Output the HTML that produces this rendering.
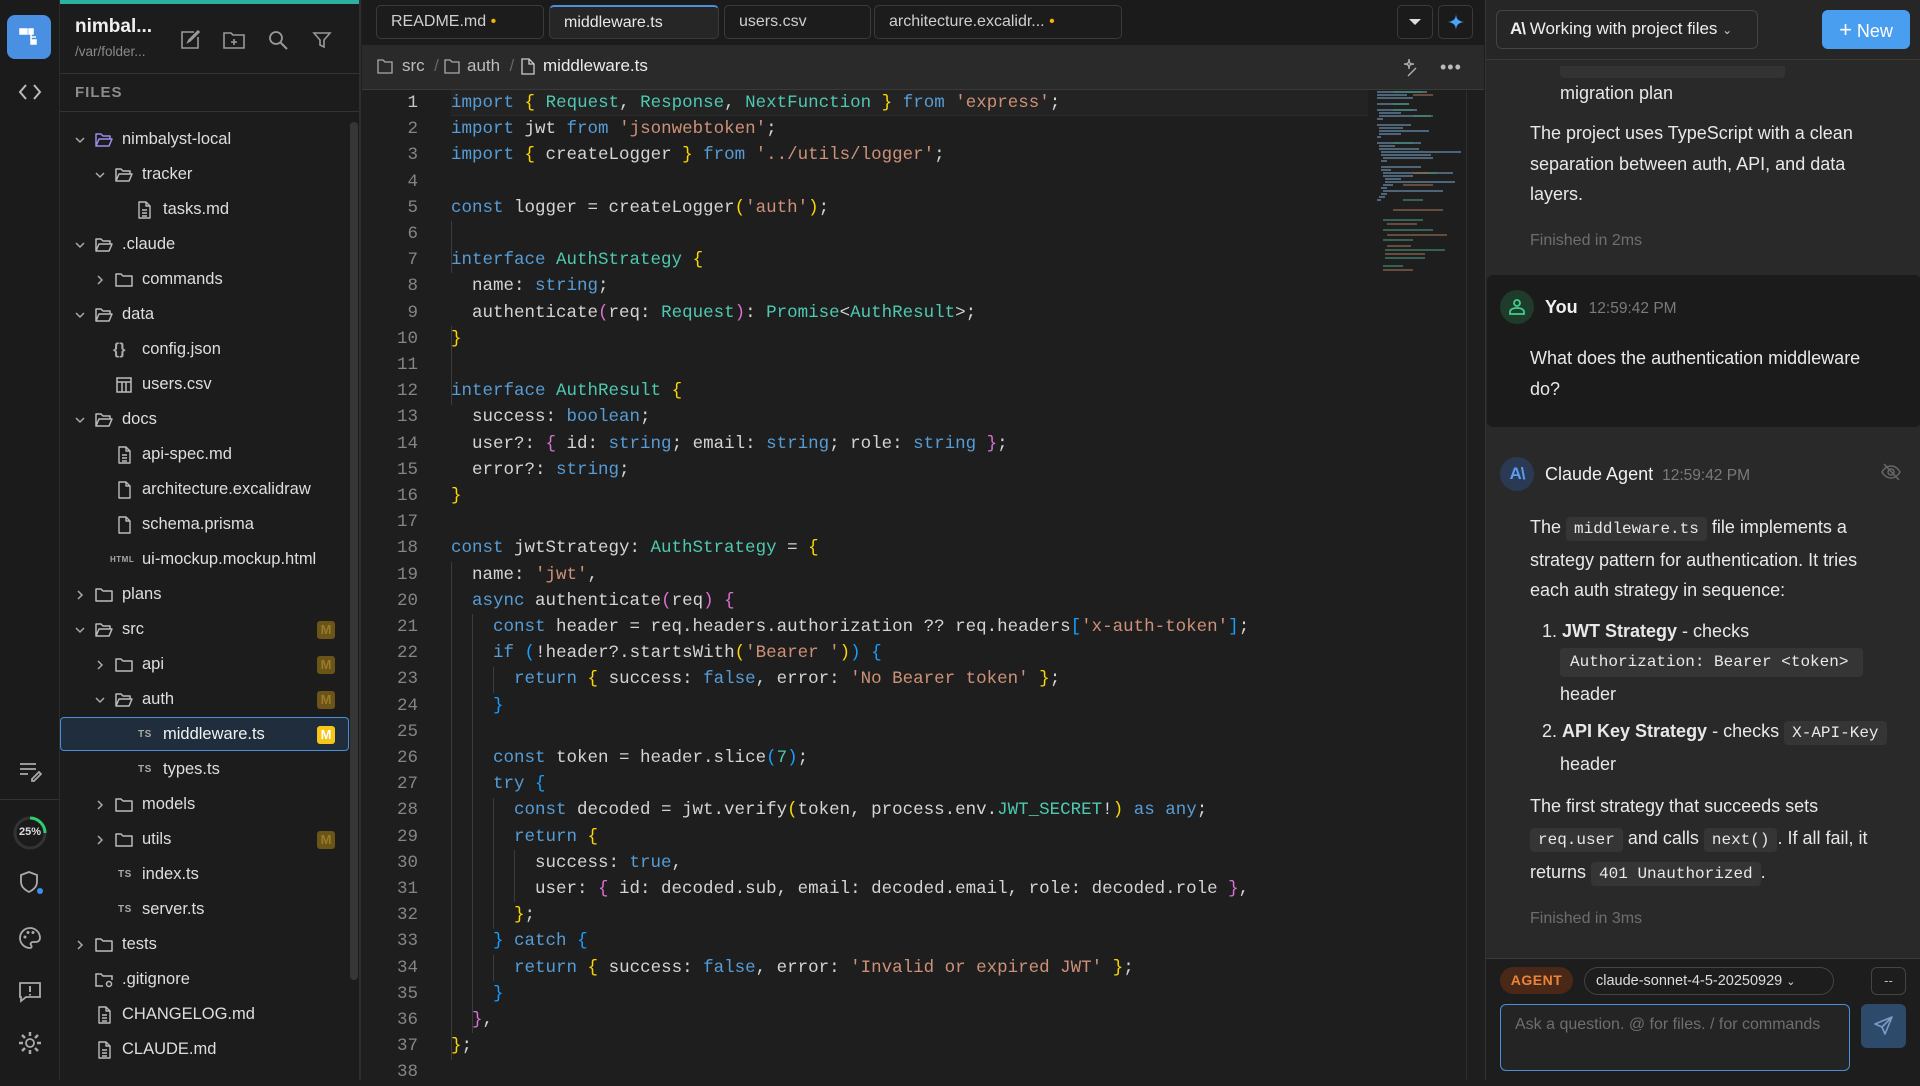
<!DOCTYPE html>
<html><head><meta charset="utf-8"><style>
*{box-sizing:border-box;margin:0;padding:0}
body{width:1920px;height:1080px;overflow:hidden;background:#1e1e1e;font-family:"Liberation Sans",sans-serif;color:#e2e2e2;position:relative}
.abs{position:absolute}
#act{left:0;top:0;width:60px;height:1080px;background:#1b1b1b;border-right:1px solid #2c2c2c}
#side{left:60px;top:0;width:301px;height:1080px;background:#1c1c1c;border-right:2px solid #2e2e2e}
.row{position:absolute;left:0;width:290px;height:35px;font-size:16.5px;line-height:35px;color:#dedede;white-space:nowrap}
.row svg{position:absolute;top:9px}
.badge{position:absolute;left:257px;top:9px;width:18px;height:18px;border-radius:3px;background:#6b5418;color:#9a7a26;font-size:13px;line-height:18px;text-align:center;font-weight:bold}
.ts{position:absolute;top:0;font-size:10px;font-weight:bold;color:#aaa;letter-spacing:.5px}
#ed{left:362px;top:0;width:1122px;height:1080px;background:#1e1e1e}
.tab{position:absolute;top:5px;height:34px;border:1px solid #3a3a3a;border-radius:5px;background:#1c1c1c;font-size:16px;line-height:32px;padding-left:14px;color:#cfcfcf}
.code{position:absolute;left:451px;font-family:"Liberation Mono",monospace;font-size:17.5px;height:26.2px;line-height:26.2px;white-space:pre;color:#d4d4d4}
.ln{position:absolute;left:362px;width:56px;text-align:right;font-family:"Liberation Mono",monospace;font-size:17.5px;height:26.2px;line-height:26.2px;color:#858585}
.k{color:#569cd6}.t{color:#4ec9b0}.s{color:#ce9178}.y{color:#ffd700}.p{color:#da70d6}.b{color:#179fff}
.g{position:absolute;width:1px;background:#3c3c3c}
#chat{left:1485px;top:0;width:435px;height:1080px;background:#292929;border-left:1px solid #333}
.ct{position:absolute;left:44px;width:352px;font-size:18px;line-height:30.6px;color:#e8e8e8}
.cc{font-family:"Liberation Mono",monospace;font-size:16px;background:#353535;border-radius:4px;padding:3px 8px}
.muted{color:#6e6e6e;font-size:16px}
</style></head><body>
<svg width="0" height="0" style="position:absolute">
<defs>
<symbol id="fo" viewBox="0 0 20 18"><path d="M2 15V3h5l2 2h7v3M2 15l3-7h13l-3 7z" fill="none" stroke="currentColor" stroke-width="1.5" stroke-linejoin="round"/></symbol>
<symbol id="fc" viewBox="0 0 20 18"><path d="M2 3h5l2 2h9v10H2z" fill="none" stroke="currentColor" stroke-width="1.5" stroke-linejoin="round"/></symbol>
<symbol id="fd" viewBox="0 0 16 18"><path d="M3 1h7l4 4v12H3z M10 1v4h4 M6 9h5M6 12h5M6 15h5" fill="none" stroke="currentColor" stroke-width="1.4" stroke-linejoin="round"/></symbol>
<symbol id="ff" viewBox="0 0 16 18"><path d="M3 1h7l4 4v12H3z M10 1v4h4" fill="none" stroke="currentColor" stroke-width="1.4" stroke-linejoin="round"/></symbol>
<symbol id="cd" viewBox="0 0 12 12"><path d="M2 4l4 4 4-4" fill="none" stroke="currentColor" stroke-width="1.5"/></symbol>
<symbol id="cr" viewBox="0 0 12 12"><path d="M4 2l4 4-4 4" fill="none" stroke="currentColor" stroke-width="1.5"/></symbol>
</defs></svg>

<div id="act" class="abs">
 <div class="abs" style="left:7px;top:15px;width:44px;height:44px;border-radius:8px;background:#4a90e2"></div>
 <svg class="abs" style="left:18px;top:26px" width="22" height="22" viewBox="0 0 22 22"><path d="M2 3h7v5H2zM11 3h4v5h-4zM13 8v10h5v-4h-5M13 11h5" fill="#fff" stroke="#fff" stroke-width="1.5"/></svg>
 <svg class="abs" style="left:17px;top:83px" width="26" height="18" viewBox="0 0 26 18"><path d="M9 2L3 9l6 7M17 2l6 7-6 7" fill="none" stroke="#bbb" stroke-width="2"/></svg>
 <svg class="abs" style="left:18px;top:760px" width="24" height="22" viewBox="0 0 24 22"><path d="M2 4h16M2 9h16M2 14h8M14 19l7-7 2 2-7 7h-2z" fill="none" stroke="#aaa" stroke-width="1.8"/></svg>
 <div class="abs" style="left:0;top:799px;width:59px;height:1px;background:#333"></div>
 <svg class="abs" style="left:12px;top:815px" width="36" height="36" viewBox="0 0 36 36"><circle cx="18" cy="18" r="15" fill="none" stroke="#333" stroke-width="3"/><path d="M18 3a15 15 0 0 1 15 15" fill="none" stroke="#2ecc71" stroke-width="3"/></svg>
 <div class="abs" style="left:12px;top:826px;width:36px;text-align:center;font-size:11px;font-weight:bold;color:#ddd">25%</div>
 <svg class="abs" style="left:18px;top:870px" width="26" height="26" viewBox="0 0 26 26"><path d="M11 2l8 3v7c0 5-4 8-8 10-4-2-8-5-8-10V5z" fill="none" stroke="#aaa" stroke-width="1.8"/><circle cx="22" cy="21" r="3" fill="#3b8ff0"/></svg>
 <svg class="abs" style="left:18px;top:926px" width="24" height="24" viewBox="0 0 24 24"><path d="M12 2a10 10 0 0 0 0 20c2 0 2-2 1-3s0-3 2-3h3a4 4 0 0 0 4-4c0-6-5-10-10-10z" fill="none" stroke="#aaa" stroke-width="1.8"/><circle cx="7" cy="11" r="1.5" fill="#aaa"/><circle cx="10" cy="6.5" r="1.5" fill="#aaa"/><circle cx="15" cy="6.5" r="1.5" fill="#aaa"/></svg>
 <svg class="abs" style="left:18px;top:980px" width="24" height="24" viewBox="0 0 24 24"><path d="M2 3h20v14H8l-5 4v-4H2z" fill="none" stroke="#aaa" stroke-width="1.8"/><path d="M12 6v6M12 14v1.5" stroke="#aaa" stroke-width="2"/></svg>
 <svg class="abs" style="left:18px;top:1031px" width="24" height="24" viewBox="0 0 24 24"><circle cx="12" cy="12" r="4" fill="none" stroke="#aaa" stroke-width="1.8"/><path d="M12 1v4M12 19v4M1 12h4M19 12h4M4 4l3 3M17 17l3 3M4 20l3-3M17 7l3-3" stroke="#aaa" stroke-width="2.5"/></svg>
</div>

<div id="side" class="abs">
 <div class="abs" style="left:0;top:0;width:299px;height:4px;background:#2ab3a0"></div>
 <div class="abs" style="left:15px;top:16px;font-size:19px;font-weight:bold;color:#f0f0f0">nimbal...</div>
 <div class="abs" style="left:15px;top:44px;font-size:13.5px;color:#8a8a8a">/var/folder...</div>
 <svg class="abs" style="left:119px;top:29px" width="22" height="22" viewBox="0 0 22 22"><path d="M15 3H3v16h16V8M9 13l2-1 9-9-1-1-9 9z" fill="none" stroke="#999" stroke-width="1.6"/></svg>
 <svg class="abs" style="left:162px;top:30px" width="24" height="20" viewBox="0 0 24 20"><path d="M2 3h7l2 2h11v13H2zM12 9v6M9 12h6" fill="none" stroke="#999" stroke-width="1.6"/></svg>
 <svg class="abs" style="left:207px;top:29px" width="22" height="22" viewBox="0 0 22 22"><circle cx="9" cy="9" r="6" fill="none" stroke="#999" stroke-width="1.8"/><path d="M13.5 13.5L20 20" stroke="#999" stroke-width="2"/></svg>
 <svg class="abs" style="left:252px;top:30px" width="20" height="20" viewBox="0 0 20 20"><path d="M2 3h16l-6 7v7l-4-2v-5z" fill="none" stroke="#999" stroke-width="1.6"/></svg>
 <div class="abs" style="left:0;top:73px;width:299px;height:1px;background:#333"></div>
 <div class="abs" style="left:15px;top:84px;font-size:15px;letter-spacing:1px;font-weight:bold;color:#8c8c8c">FILES</div>
 <div class="abs" style="left:0;top:111px;width:299px;height:1px;background:#333"></div>
 <div class="abs" style="left:290px;top:122px;width:8px;height:858px;border-radius:4px;background:#363636"></div>

 <div class="abs" style="left:0;top:717px;width:289px;height:34px;border:1px solid #4a8fd8;border-radius:4px;background:#1f2d3d"></div>

 <div class="row" style="top:122px"><svg style="left:14px;top:12px;color:#aaa" width="12" height="12"><use href="#cd"/></svg><svg style="left:34px;color:#9d8cf0" width="20" height="18"><use href="#fo"/></svg><span style="position:absolute;left:62px">nimbalyst-local</span></div>
 <div class="row" style="top:157px"><svg style="left:34px;top:12px;color:#aaa" width="12" height="12"><use href="#cd"/></svg><svg style="left:54px;color:#bbb" width="20" height="18"><use href="#fo"/></svg><span style="position:absolute;left:82px">tracker</span></div>
 <div class="row" style="top:192px"><svg style="left:76px;color:#bbb" width="16" height="18"><use href="#fd"/></svg><span style="position:absolute;left:103px">tasks.md</span></div>
 <div class="row" style="top:227px"><svg style="left:14px;top:12px;color:#aaa" width="12" height="12"><use href="#cd"/></svg><svg style="left:34px;color:#bbb" width="20" height="18"><use href="#fo"/></svg><span style="position:absolute;left:62px">.claude</span></div>
 <div class="row" style="top:262px"><svg style="left:34px;top:12px;color:#aaa" width="12" height="12"><use href="#cr"/></svg><svg style="left:54px;color:#bbb" width="20" height="18"><use href="#fc"/></svg><span style="position:absolute;left:82px">commands</span></div>
 <div class="row" style="top:297px"><svg style="left:14px;top:12px;color:#aaa" width="12" height="12"><use href="#cd"/></svg><svg style="left:34px;color:#bbb" width="20" height="18"><use href="#fo"/></svg><span style="position:absolute;left:62px">data</span></div>
 <div class="row" style="top:332px"><span style="position:absolute;left:53px;color:#aaa;font-size:16px;font-weight:bold">{}</span><span style="position:absolute;left:82px">config.json</span></div>
 <div class="row" style="top:367px"><svg style="left:55px;color:#bbb" width="18" height="18" viewBox="0 0 18 18"><path d="M2 2h14v14H2zM2 6h14M7 6v10M11 6v10" fill="none" stroke="currentColor" stroke-width="1.5"/></svg><span style="position:absolute;left:82px">users.csv</span></div>
 <div class="row" style="top:402px"><svg style="left:14px;top:12px;color:#aaa" width="12" height="12"><use href="#cd"/></svg><svg style="left:34px;color:#bbb" width="20" height="18"><use href="#fo"/></svg><span style="position:absolute;left:62px">docs</span></div>
 <div class="row" style="top:437px"><svg style="left:56px;color:#bbb" width="16" height="18"><use href="#fd"/></svg><span style="position:absolute;left:82px">api-spec.md</span></div>
 <div class="row" style="top:472px"><svg style="left:56px;color:#bbb" width="16" height="18"><use href="#ff"/></svg><span style="position:absolute;left:82px">architecture.excalidraw</span></div>
 <div class="row" style="top:507px"><svg style="left:56px;color:#bbb" width="16" height="18"><use href="#ff"/></svg><span style="position:absolute;left:82px">schema.prisma</span></div>
 <div class="row" style="top:542px"><span class="ts" style="left:50px;font-size:8px">HTML</span><span style="position:absolute;left:82px">ui-mockup.mockup.html</span></div>
 <div class="row" style="top:577px"><svg style="left:14px;top:12px;color:#aaa" width="12" height="12"><use href="#cr"/></svg><svg style="left:34px;color:#bbb" width="20" height="18"><use href="#fc"/></svg><span style="position:absolute;left:62px">plans</span></div>
 <div class="row" style="top:612px"><svg style="left:14px;top:12px;color:#aaa" width="12" height="12"><use href="#cd"/></svg><svg style="left:34px;color:#bbb" width="20" height="18"><use href="#fo"/></svg><span style="position:absolute;left:62px">src</span><div class="badge">M</div></div>
 <div class="row" style="top:647px"><svg style="left:34px;top:12px;color:#aaa" width="12" height="12"><use href="#cr"/></svg><svg style="left:54px;color:#bbb" width="20" height="18"><use href="#fc"/></svg><span style="position:absolute;left:82px">api</span><div class="badge">M</div></div>
 <div class="row" style="top:682px"><svg style="left:34px;top:12px;color:#aaa" width="12" height="12"><use href="#cd"/></svg><svg style="left:54px;color:#bbb" width="20" height="18"><use href="#fo"/></svg><span style="position:absolute;left:82px">auth</span><div class="badge">M</div></div>
 <div class="row" style="top:717px"><span class="ts" style="left:78px">TS</span><span style="position:absolute;left:103px;color:#f2f2f2">middleware.ts</span><div class="badge" style="background:#f5c518;color:#fff">M</div></div>
 <div class="row" style="top:752px"><span class="ts" style="left:78px">TS</span><span style="position:absolute;left:103px">types.ts</span></div>
 <div class="row" style="top:787px"><svg style="left:34px;top:12px;color:#aaa" width="12" height="12"><use href="#cr"/></svg><svg style="left:54px;color:#bbb" width="20" height="18"><use href="#fc"/></svg><span style="position:absolute;left:82px">models</span></div>
 <div class="row" style="top:822px"><svg style="left:34px;top:12px;color:#aaa" width="12" height="12"><use href="#cr"/></svg><svg style="left:54px;color:#bbb" width="20" height="18"><use href="#fc"/></svg><span style="position:absolute;left:82px">utils</span><div class="badge">M</div></div>
 <div class="row" style="top:857px"><span class="ts" style="left:58px">TS</span><span style="position:absolute;left:82px">index.ts</span></div>
 <div class="row" style="top:892px"><span class="ts" style="left:58px">TS</span><span style="position:absolute;left:82px">server.ts</span></div>
 <div class="row" style="top:927px"><svg style="left:14px;top:12px;color:#aaa" width="12" height="12"><use href="#cr"/></svg><svg style="left:34px;color:#bbb" width="20" height="18"><use href="#fc"/></svg><span style="position:absolute;left:62px">tests</span></div>
 <div class="row" style="top:962px"><svg style="left:34px;color:#bbb" width="20" height="18" viewBox="0 0 20 18"><path d="M9 15H2V3h5l2 2h9v4" fill="none" stroke="currentColor" stroke-width="1.5"/><circle cx="15" cy="13" r="2.5" fill="none" stroke="currentColor" stroke-width="1.5"/></svg><span style="position:absolute;left:62px">.gitignore</span></div>
 <div class="row" style="top:997px"><svg style="left:36px;color:#bbb" width="16" height="18"><use href="#fd"/></svg><span style="position:absolute;left:62px">CHANGELOG.md</span></div>
 <div class="row" style="top:1032px"><svg style="left:36px;color:#bbb" width="16" height="18"><use href="#fd"/></svg><span style="position:absolute;left:62px">CLAUDE.md</span></div>
</div>

<div id="ed" class="abs"></div>
<div class="abs" style="left:362px;top:0;width:1122px;height:45px;background:#1b1b1b"></div>
<div class="tab" style="left:376px;width:168px">README.md <span style="color:#f5b400">•</span></div>
<div class="tab" style="left:549px;width:170px;background:#262626;border-top:2px solid #4a8fd8;color:#e8e8e8">middleware.ts</div>
<div class="tab" style="left:724px;width:147px">users.csv</div>
<div class="tab" style="left:874px;width:248px">architecture.excalidr... <span style="color:#f5b400">•</span></div>
<div class="abs" style="left:1397px;top:5px;width:36px;height:34px;border:1px solid #3a3a3a;border-radius:5px"></div>
<div class="abs" style="left:1409px;top:19px;width:0;height:0;border-left:6px solid transparent;border-right:6px solid transparent;border-top:6px solid #ddd"></div>
<div class="abs" style="left:1438px;top:5px;width:35px;height:34px;border:1px solid #3a3a3a;border-radius:5px"></div>
<svg class="abs" style="left:1446px;top:12px" width="20" height="20" viewBox="0 0 20 20"><path d="M10 1C10 7 12 9 18 10 12 11 10 13 10 19 10 13 8 11 2 10 8 9 10 7 10 1z" fill="#4aa3ff"/></svg>

<div class="abs" style="left:362px;top:45px;width:1122px;height:45px;background:#2a2a2a;border-bottom:1px solid #3a3a3a"></div>
<svg class="abs" style="left:377px;top:59px" width="16" height="15" viewBox="0 0 16 15"><path d="M1 1h5l2 2h7v11H1z" fill="none" stroke="#aaa" stroke-width="1.3"/></svg>
<div class="abs" style="left:402px;top:56px;font-size:17px;color:#bdbdbd">src&nbsp; <span style="color:#666">/</span></div>
<svg class="abs" style="left:444px;top:59px" width="16" height="15" viewBox="0 0 16 15"><path d="M1 1h5l2 2h7v11H1z" fill="none" stroke="#aaa" stroke-width="1.3"/></svg>
<div class="abs" style="left:467px;top:56px;font-size:17px;color:#bdbdbd">auth&nbsp; <span style="color:#666">/</span></div>
<svg class="abs" style="left:521px;top:58px" width="14" height="17" viewBox="0 0 14 17"><path d="M1 1h7l5 5v10H1z M8 1v5h5" fill="none" stroke="#ccc" stroke-width="1.3"/></svg>
<div class="abs" style="left:543px;top:56px;font-size:17px;color:#ececec">middleware.ts</div>
<svg class="abs" style="left:1402px;top:58px" width="18" height="20" viewBox="0 0 18 20"><path d="M7 1c0 4 1 5 5 5-4 0-5 1-5 5 0-4-1-5-5-5 4 0 5-1 5-5zM6 18l8-8" fill="none" stroke="#aaa" stroke-width="1.5"/></svg>
<div class="abs" style="left:1440px;top:57px;font-size:18px;color:#bbb;letter-spacing:1px">•••</div>

<div class="abs" style="left:451px;top:90px;width:917px;height:26px;background:#232323;border-bottom:1px solid #2c2c2c"></div>
<div class="abs" style="left:1371px;top:90px;width:95px;height:990px;background:#1e1e1e"></div>
<svg class="abs" style="left:1373px;top:90px" width="92" height="190" viewBox="0 0 92 190">
<g stroke-width="1.2">
<path d="M4 2h50M4 5h30M4 8h36M4 14h32M4 20h40M6 23h22M6 26h52M4 29h6M4 35h34M6 38h24M6 41h50M6 44h22M4 47h4M4 53h44M6 56h16M6 59h40M8 62h80M8 65h50M10 68h50M8 71h6M8 77h40M8 80h10M10 83h70M10 86h30M12 89h16M12 92h70M10 95h10M8 98h6M10 101h60M8 104h6M6 107h6M4 110h4" stroke="#6a8fb0"/>
<path d="M20 2h30M20 14h16M20 20h20M40 26h20M20 53h20M44 83h20M30 110h20M10 130h40M10 140h50M10 150h30M12 160h60M12 168h40M10 176h20" stroke="#4ea890" opacity=".8"/>
<path d="M40 5h20M40 83h16M30 95h30M20 120h50M14 134h30M14 145h60M14 156h24M12 164h40M10 180h30" stroke="#b07a5a" opacity=".8"/>
</g></svg>
<div class="abs" style="left:1466px;top:90px;width:1px;height:990px;background:#2e2e2e"></div>

<div class="g" style="left:451px;top:221px;height:52px"></div>
<div class="g" style="left:451px;top:326px;height:79px"></div>
<div class="g" style="left:451px;top:562px;height:498px"></div>
<div class="g" style="left:472px;top:614px;height:419px"></div>
<div class="g" style="left:493px;top:667px;height:26px"></div>
<div class="g" style="left:493px;top:798px;height:131px"></div>
<div class="g" style="left:493px;top:955px;height:26px"></div>
<div class="g" style="left:514px;top:850px;height:52px"></div>

<div class="ln" style="top:90px;color:#c6c6c6">1</div><div class="ln" style="top:116.2px">2</div><div class="ln" style="top:142.4px">3</div><div class="ln" style="top:168.6px">4</div><div class="ln" style="top:194.8px">5</div><div class="ln" style="top:221px">6</div><div class="ln" style="top:247.2px">7</div><div class="ln" style="top:273.4px">8</div><div class="ln" style="top:299.6px">9</div><div class="ln" style="top:325.8px">10</div><div class="ln" style="top:352px">11</div><div class="ln" style="top:378.2px">12</div><div class="ln" style="top:404.4px">13</div><div class="ln" style="top:430.6px">14</div><div class="ln" style="top:456.8px">15</div><div class="ln" style="top:483px">16</div><div class="ln" style="top:509.2px">17</div><div class="ln" style="top:535.4px">18</div><div class="ln" style="top:561.6px">19</div><div class="ln" style="top:587.8px">20</div><div class="ln" style="top:614px">21</div><div class="ln" style="top:640.2px">22</div><div class="ln" style="top:666.4px">23</div><div class="ln" style="top:692.6px">24</div><div class="ln" style="top:718.8px">25</div><div class="ln" style="top:745px">26</div><div class="ln" style="top:771.2px">27</div><div class="ln" style="top:797.4px">28</div><div class="ln" style="top:823.6px">29</div><div class="ln" style="top:849.8px">30</div><div class="ln" style="top:876px">31</div><div class="ln" style="top:902.2px">32</div><div class="ln" style="top:928.4px">33</div><div class="ln" style="top:954.6px">34</div><div class="ln" style="top:980.8px">35</div><div class="ln" style="top:1007px">36</div><div class="ln" style="top:1033.2px">37</div><div class="ln" style="top:1059.4px">38</div>

<div class="code" style="top:90px"><span class="k">import</span> <span class="y">{</span> <span class="t">Request</span>, <span class="t">Response</span>, <span class="t">NextFunction</span> <span class="y">}</span> <span class="k">from</span> <span class="s">'express'</span>;</div>
<div class="code" style="top:116.2px"><span class="k">import</span> jwt <span class="k">from</span> <span class="s">'jsonwebtoken'</span>;</div>
<div class="code" style="top:142.4px"><span class="k">import</span> <span class="y">{</span> createLogger <span class="y">}</span> <span class="k">from</span> <span class="s">'../utils/logger'</span>;</div>
<div class="code" style="top:194.8px"><span class="k">const</span> logger = createLogger<span class="y">(</span><span class="s">'auth'</span><span class="y">)</span>;</div>
<div class="code" style="top:247.2px"><span class="k">interface</span> <span class="t">AuthStrategy</span> <span class="y">{</span></div>
<div class="code" style="top:273.4px">  name: <span class="k">string</span>;</div>
<div class="code" style="top:299.6px">  authenticate<span class="p">(</span>req: <span class="t">Request</span><span class="p">)</span>: <span class="t">Promise</span>&lt;<span class="t">AuthResult</span>&gt;;</div>
<div class="code" style="top:325.8px"><span class="y">}</span></div>
<div class="code" style="top:378.2px"><span class="k">interface</span> <span class="t">AuthResult</span> <span class="y">{</span></div>
<div class="code" style="top:404.4px">  success: <span class="k">boolean</span>;</div>
<div class="code" style="top:430.6px">  user?: <span class="p">{</span> id: <span class="k">string</span>; email: <span class="k">string</span>; role: <span class="k">string</span> <span class="p">}</span>;</div>
<div class="code" style="top:456.8px">  error?: <span class="k">string</span>;</div>
<div class="code" style="top:483px"><span class="y">}</span></div>
<div class="code" style="top:535.4px"><span class="k">const</span> jwtStrategy: <span class="t">AuthStrategy</span> = <span class="y">{</span></div>
<div class="code" style="top:561.6px">  name: <span class="s">'jwt'</span>,</div>
<div class="code" style="top:587.8px">  <span class="k">async</span> authenticate<span class="p">(</span>req<span class="p">)</span> <span class="p">{</span></div>
<div class="code" style="top:614px">    <span class="k">const</span> header = req.headers.authorization ?? req.headers<span class="b">[</span><span class="s">'x-auth-token'</span><span class="b">]</span>;</div>
<div class="code" style="top:640.2px">    <span class="k">if</span> <span class="b">(</span>!header?.startsWith<span class="y">(</span><span class="s">'Bearer '</span><span class="y">)</span><span class="b">)</span> <span class="b">{</span></div>
<div class="code" style="top:666.4px">      <span class="k">return</span> <span class="y">{</span> success: <span class="k">false</span>, error: <span class="s">'No Bearer token'</span> <span class="y">}</span>;</div>
<div class="code" style="top:692.6px">    <span class="b">}</span></div>
<div class="code" style="top:745px">    <span class="k">const</span> token = header.slice<span class="b">(</span><span class="t">7</span><span class="b">)</span>;</div>
<div class="code" style="top:771.2px">    <span class="k">try</span> <span class="b">{</span></div>
<div class="code" style="top:797.4px">      <span class="k">const</span> decoded = jwt.verify<span class="y">(</span>token, process.env.<span class="t">JWT_SECRET</span>!<span class="y">)</span> <span class="k">as</span> <span class="k">any</span>;</div>
<div class="code" style="top:823.6px">      <span class="k">return</span> <span class="y">{</span></div>
<div class="code" style="top:849.8px">        success: <span class="k">true</span>,</div>
<div class="code" style="top:876px">        user: <span class="p">{</span> id: decoded.sub, email: decoded.email, role: decoded.role <span class="p">}</span>,</div>
<div class="code" style="top:902.2px">      <span class="y">}</span>;</div>
<div class="code" style="top:928.4px">    <span class="b">}</span> <span class="k">catch</span> <span class="b">{</span></div>
<div class="code" style="top:954.6px">      <span class="k">return</span> <span class="y">{</span> success: <span class="k">false</span>, error: <span class="s">'Invalid or expired JWT'</span> <span class="y">}</span>;</div>
<div class="code" style="top:980.8px">    <span class="b">}</span></div>
<div class="code" style="top:1007px">  <span class="p">}</span>,</div>
<div class="code" style="top:1033.2px"><span class="y">}</span>;</div>

<div id="chat" class="abs">
 <div class="abs" style="left:0;top:0;width:435px;height:60px;background:#262626;border-bottom:1px solid #3a3a3a"></div>
 <div class="abs" style="left:10px;top:10px;width:262px;height:39px;border:1px solid #444;border-radius:6px"></div>
 <div class="abs" style="left:24px;top:19px;font-size:17px;color:#eee"><b style="letter-spacing:-1px">A\</b> Working with project files <span style="font-size:12px;color:#ccc">&#8964;</span></div>
 <div class="abs" style="left:336px;top:10px;width:88px;height:39px;border-radius:6px;background:#4a9ef0;color:#fff;font-size:18px;line-height:39px;text-align:center"><span style="font-size:22px">+</span> New</div>

 <div class="abs" style="left:74px;top:66px;width:225px;height:12px;background:#333;border-radius:0 0 4px 4px"></div>
 <div class="ct" style="top:78px;left:74px">migration plan</div>
 <div class="ct" style="top:118px">The project uses TypeScript with a clean separation between auth, API, and data layers.</div>
 <div class="ct muted" style="top:226px">Finished in 2ms</div>

 <div class="abs" style="left:1px;top:275px;width:434px;height:152px;background:#1b1b1b;border-radius:6px"></div>
 <div class="abs" style="left:14px;top:290px;width:34px;height:34px;border-radius:17px;background:#1f3b2a"></div>
 <svg class="abs" style="left:21px;top:297px" width="20" height="20" viewBox="0 0 20 20"><circle cx="10" cy="6" r="3" fill="none" stroke="#3ecf8e" stroke-width="1.8"/><path d="M3 17v-2c0-2 2-4 7-4s7 2 7 4v2z" fill="none" stroke="#3ecf8e" stroke-width="1.8"/></svg>
 <div class="abs" style="left:59px;top:297px;font-size:18px;font-weight:bold;color:#f0f0f0">You <span style="font-weight:normal;font-size:15.5px;color:#7a7a7a;margin-left:6px">12:59:42 PM</span></div>
 <div class="ct" style="top:343px">What does the authentication middleware do?</div>

 <div class="abs" style="left:14px;top:457px;width:34px;height:34px;border-radius:17px;background:#2a3a55;color:#5b9bf0;font-weight:bold;font-size:17px;line-height:34px;text-align:center;letter-spacing:-1px">A\</div>
 <div class="abs" style="left:59px;top:464px;font-size:18px;color:#f0f0f0">Claude Agent <span style="font-size:15.5px;color:#7a7a7a;margin-left:4px">12:59:42 PM</span></div>
 <svg class="abs" style="left:395px;top:462px" width="20" height="20" viewBox="0 0 20 20"><path d="M1 10s3-6 9-6 9 6 9 6-3 6-9 6-9-6-9-6z" fill="none" stroke="#666" stroke-width="1.5"/><circle cx="10" cy="10" r="3" fill="none" stroke="#666" stroke-width="1.5"/><path d="M3 2l15 16" stroke="#666" stroke-width="1.5"/></svg>

 <div class="ct" style="top:512px">The <span class="cc">middleware.ts</span> file implements a strategy pattern for authentication. It tries each auth strategy in sequence:</div>
 <div class="ct" style="top:616px;left:56px;width:360px">1. <b>JWT Strategy</b> - checks</div>
 <div class="abs" style="left:74px;top:648px;width:303px;height:29px;background:#353535;border-radius:4px;font-family:'Liberation Mono',monospace;font-size:16px;line-height:29px;padding-left:10px;color:#e8e8e8">Authorization: Bearer &lt;token&gt;</div>
 <div class="ct" style="top:679px;left:74px">header</div>
 <div class="ct" style="top:716px;left:56px;width:375px">2. <b>API Key Strategy</b> - checks <span class="cc">X-API-Key</span></div>
 <div class="ct" style="top:749px;left:74px">header</div>
 <div class="ct" style="top:790px;line-height:32px">The first strategy that succeeds sets <span class="cc">req.user</span> and calls <span class="cc">next()</span>. If all fail, it returns <span class="cc">401 Unauthorized</span>.</div>
 <div class="ct muted" style="top:904px">Finished in 3ms</div>

 <div class="abs" style="left:0;top:958px;width:435px;height:122px;background:#1d1d1d;border-top:1px solid #3a3a3a"></div>
 <div class="abs" style="left:14px;top:967px;width:73px;height:27px;border-radius:14px;background:#4a2818;color:#e8853a;font-size:14px;font-weight:bold;line-height:27px;text-align:center;letter-spacing:.5px">AGENT</div>
 <div class="abs" style="left:98px;top:967px;width:250px;height:28px;border:1px solid #444;border-radius:14px;font-size:14.5px;line-height:26px;padding-left:11px;color:#ddd">claude-sonnet-4-5-20250929 <span style="font-size:11px">&#8964;</span></div>
 <div class="abs" style="left:385px;top:967px;width:35px;height:28px;border:1px solid #444;border-radius:6px;font-size:13px;line-height:26px;text-align:center;color:#bbb">--</div>
 <div class="abs" style="left:14px;top:1004px;width:350px;height:67px;border:1px solid #4a8fd8;border-radius:6px;background:#242424;padding:8px 14px;font-size:16px;line-height:23px;color:#6e6e6e">Ask a question. @ for files. / for commands</div>
 <div class="abs" style="left:375px;top:1004px;width:45px;height:44px;border-radius:6px;background:#2d4a6b"></div>
 <svg class="abs" style="left:387px;top:1016px" width="21" height="20" viewBox="0 0 21 20"><path d="M19 1L2 8l7 3 3 7z M19 1L9 11" fill="none" stroke="#7a9cc4" stroke-width="1.6" stroke-linejoin="round"/></svg>
</div>
</body></html>
